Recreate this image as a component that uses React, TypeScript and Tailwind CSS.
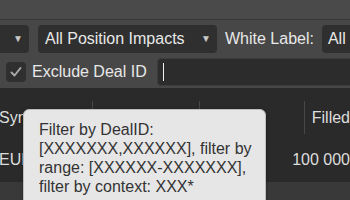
import React from "react";

const Caret = () => <span className="text-[10px] text-[#c8c8c8] leading-none">▼</span>;

export default function App() {
  return (
    <div className="w-[350px] h-[200px] overflow-hidden relative bg-[#474747] text-[16px] text-[#e8e8e8] font-['Liberation_Sans',Arial,sans-serif]">
      {/* top strip */}
      <div className="h-[20px] bg-[#4a4a4a] border-b border-[#383838]" />

      {/* filter toolbar */}
      <div className="flex flex-col gap-[5px] pt-[5px] pb-[2px]">
        <div className="flex items-center h-[28px] whitespace-nowrap">
          <div className="-ml-[20px] w-[49px] h-full shrink-0 rounded-[4px] bg-[#2f2f2f] flex items-center justify-end pr-[6px]">
            <Caret />
          </div>
          <div className="ml-[9px] w-[179px] h-full shrink-0 rounded-[4px] bg-[#2f2f2f] flex items-center justify-between pl-[7px] pr-[6px]">
            <span>All Position Impacts</span>
            <Caret />
          </div>
          <span className="ml-[8px] shrink-0">White Label:</span>
          <div className="ml-[8px] w-[80px] h-full shrink-0 rounded-[4px] bg-[#2f2f2f] flex items-center pl-[6px]">
            <span>All</span>
          </div>
        </div>

        <div className="flex items-center h-[28px] whitespace-nowrap">
          <div className="ml-[6px] w-[20px] h-[20px] shrink-0 rounded-[4px] bg-[#2f2f2f] flex items-center justify-center">
            <svg width="14" height="14" viewBox="0 0 14 14" fill="none">
              <path d="M2.5 7.5 L5.5 10.5 L11.5 3" stroke="#a9a9a9" strokeWidth="2" strokeLinecap="round" strokeLinejoin="round" />
            </svg>
          </div>
          <span className="ml-[6px] shrink-0">Exclude Deal ID</span>
          <div className="ml-[10px] w-[220px] h-full shrink-0 rounded-[4px] bg-[#2c2c2c] border border-[#3c3c3c] flex items-center pl-[5px]">
            <span className="w-[1px] h-[18px] bg-[#f0f0f0]" />
          </div>
        </div>
      </div>

      {/* grid */}
      <div className="bg-[#2a2a2a] whitespace-nowrap text-[#dedede]">
        <div className="flex h-[50px]">
          <div className="-ml-[1px] w-[94px] mt-[13px] h-[33px] border-r border-[#484848] flex items-center">Symbol</div>
          <div className="w-[107px] mt-[13px] h-[33px] border-r border-[#484848]" />
          <div className="w-[105px] mt-[13px] h-[33px] border-r border-[#484848]" />
          <div className="mt-[13px] h-[33px] pl-[7px] flex items-center">Filled</div>
        </div>
        <div className="flex h-[44px] items-center">
          <div className="-ml-[1px] w-[94px]">EURUSD</div>
          <div className="w-[107px]" />
          <div className="w-[105px]" />
          <div className="pl-[8px]">100 000</div>
        </div>
      </div>
      <div className="h-[30px] bg-[#393939]" />

      {/* tooltip */}
      <div className="absolute left-[23px] top-[109px] w-[243px] h-[110px] rounded-[6px] bg-[#e6e6e6] border border-[#bdbdbd] shadow-[0_1px_4px_rgba(0,0,0,0.35)] pl-[15px] pt-[10px] text-[#333333] leading-[19px] whitespace-nowrap">
        <div>Filter by DealID:</div>
        <div>[XXXXXXX,XXXXXX], filter by</div>
        <div>range: [XXXXXX-XXXXXXX],</div>
        <div>filter by context: XXX*</div>
      </div>
    </div>
  );
}
